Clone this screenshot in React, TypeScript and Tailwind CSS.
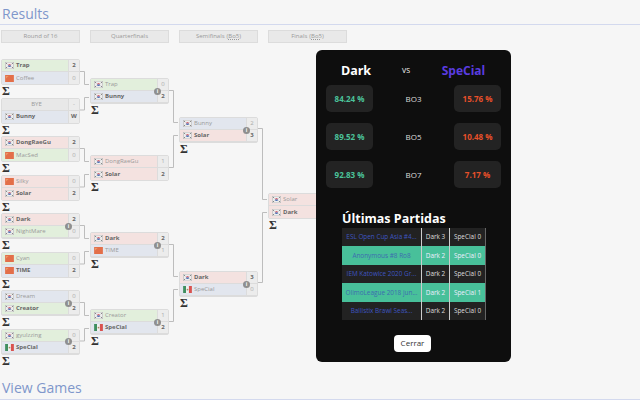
type Flag = "kr" | "cn" | "mx" | "";
type Tone = "green" | "red" | "blue" | "gray";
type Row = { name: string; flag: Flag; score: string; tone: Tone; win?: boolean };
type Game = { top: Row; bottom: Row; info?: boolean };

const r = (name: string, flag: Flag, score: string, tone: Tone, win = false): Row => ({ name, flag, score, tone, win });

const round16: Game[] = [
  { top: r("Trap", "kr", "2", "green", true), bottom: r("Coffee", "cn", "0", "blue") },
  { top: r("BYE", "", "-", "gray"), bottom: r("Bunny", "kr", "W", "blue", true) },
  { top: r("DongRaeGu", "kr", "2", "red", true), bottom: r("MacSed", "cn", "0", "green") },
  { top: r("Silky", "cn", "0", "red"), bottom: r("Solar", "kr", "2", "red", true) },
  { top: r("Dark", "kr", "2", "red", true), bottom: r("NightMare", "kr", "0", "green"), info: true },
  { top: r("Cyan", "cn", "0", "green"), bottom: r("TIME", "cn", "2", "blue", true) },
  { top: r("Dream", "kr", "0", "blue"), bottom: r("Creator", "kr", "2", "green", true), info: true },
  { top: r("gyulzzing", "kr", "0", "green"), bottom: r("SpeCial", "mx", "2", "blue", true), info: true },
];
const quarters: Game[] = [
  { top: r("Trap", "kr", "0", "green"), bottom: r("Bunny", "kr", "2", "blue", true), info: true },
  { top: r("DongRaeGu", "kr", "1", "red"), bottom: r("Solar", "kr", "2", "red", true) },
  { top: r("Dark", "kr", "2", "red", true), bottom: r("TIME", "cn", "1", "blue"), info: true },
  { top: r("Creator", "kr", "1", "green"), bottom: r("SpeCial", "mx", "2", "blue", true), info: true },
];
const semis: Game[] = [
  { top: r("Bunny", "kr", "2", "blue"), bottom: r("Solar", "kr", "3", "red", true), info: true },
  { top: r("Dark", "kr", "3", "red", true), bottom: r("SpeCial", "mx", "0", "blue"), info: true },
];
const finals: Game[] = [{ top: r("Solar", "kr", "", "red"), bottom: r("Dark", "kr", "", "red", true) }];

const toneBg: Record<Tone, string> = {
  green: "bg-[#e2efdc]",
  red: "bg-[#f4e2e0]",
  blue: "bg-[#e2e6ee]",
  gray: "bg-[#e8e8e8]",
};

function FlagIcon({ flag }: { flag: Flag }) {
  if (flag === "mx")
    return (
      <svg width="9" height="7" viewBox="0 0 10 8" className="shrink-0">
        <rect width="3.4" height="8" fill="#3f8f5f" />
        <rect x="3.4" width="3.2" height="8" fill="#f1f1f1" />
        <rect x="6.6" width="3.4" height="8" fill="#d9534f" />
        <circle cx="5" cy="4" r="1" fill="#a98b5f" />
      </svg>
    );
  if (flag === "cn")
    return (
      <svg width="9" height="7" viewBox="0 0 10 8" className="shrink-0">
        <rect width="10" height="8" fill="#e36f49" />
        <path d="M1 1 L4 1 L1 4 Z" fill="#eb9a66" />
      </svg>
    );
  return (
    <svg width="9" height="7" viewBox="0 0 10 8" className="shrink-0">
      <rect width="10" height="8" fill="#eeeeee" stroke="#a8a8a8" strokeWidth="0.8" />
      <path d="M3.2 4 A1.8 1.8 0 0 1 6.8 4 Z" fill="#d8606a" />
      <path d="M3.2 4 A1.8 1.8 0 0 0 6.8 4 Z" fill="#4c6fb5" />
      <path d="M1 1.2 L2.4 2.4 M1 6.8 L2.4 5.6 M9 1.2 L7.6 2.4 M9 6.8 L7.6 5.6" stroke="#777" strokeWidth="1" />
    </svg>
  );
}

function TeamRow({ row }: { row: Row }) {
  return (
    <div className="flex h-[12px] border-b border-[#dcdcdc] last:border-b-0">
      <div className={`flex min-w-0 flex-1 items-center gap-[2px] pl-[3px] ${toneBg[row.tone]} ${row.flag ? "" : "justify-center"}`}>
        {row.flag && <FlagIcon flag={row.flag} />}
        <span className={`whitespace-nowrap text-[6px] leading-[11px] ${row.win ? "font-bold text-[#666]" : "text-[#9a9a9a]"}`}>{row.name}</span>
      </div>
      <div className={`flex w-[11px] shrink-0 items-center justify-center border-l border-[#dcdcdc] bg-[#ececec] text-[6px] leading-[11px] ${row.win ? "font-bold text-[#666]" : "text-[#aaa]"}`}>
        {row.score}
      </div>
    </div>
  );
}

function GameBox({ game, height }: { game: Game; height: string }) {
  return (
    <div className={height}>
      <div className="relative w-[79px] rounded-[2px] border border-[#dcdcdc]">
        <TeamRow row={game.top} />
        <TeamRow row={game.bottom} />
        {game.info && (
          <span className="absolute left-[63px] top-[8.5px] flex h-[7px] w-[7px] items-center justify-center rounded-full bg-[#8f8f8f] text-[5px] font-bold leading-none text-white">
            i
          </span>
        )}
      </div>
      <div className="pl-[1px] font-['Liberation_Serif',serif] text-[12px] font-bold leading-[13px] text-[#333]">Σ</div>
    </div>
  );
}

// line from each game to the next round, coordinates inside the bracket box
function Connectors() {
  const lines: string[] = [];
  const link = (x: number, fromY: number, toY: number) => {
    lines.push(`M${x} ${fromY} H${x + 5.5} V${toY} H${x + 10}`);
  };
  round16.forEach((_, i) => {
    const y = 28.5 + i * 38.5;
    const q = Math.floor(i / 2);
    link(79, y, 41.5 + q * 77 + (i % 2 === 0 ? 0 : 13));
  });
  quarters.forEach((_, i) => {
    const y = 47.5 + i * 77;
    const s = Math.floor(i / 2);
    link(168, y, 79.5 + s * 154 + (i % 2 === 0 ? 0 : 13));
  });
  semis.forEach((_, i) => {
    const y = 85.5 + i * 154;
    link(257, y, 156.5 + (i % 2 === 0 ? 0 : 13));
  });
  return (
    <svg className="absolute left-0 top-0" width="280" height="335" fill="none">
      {lines.map((d, i) => (
        <path key={i} d={d} stroke="#bdbdbd" strokeWidth="1" />
      ))}
    </svg>
  );
}

function Percent({ value, color }: { value: string; color: string }) {
  return (
    <div className={`flex h-[27px] w-[47px] items-center justify-center rounded-[5px] bg-[#232323] text-[8px] font-bold ${color}`}>
      {value}
    </div>
  );
}

const stats = [
  { left: "84.24 %", mode: "BO3", right: "15.76 %" },
  { left: "89.52 %", mode: "BO5", right: "10.48 %" },
  { left: "92.83 %", mode: "BO7", right: "7.17 %" },
];

const recent = [
  { name: "ESL Open Cup Asia #4...", a: "Dark 3", b: "SpeCial 0", hl: false },
  { name: "Anonymous #8 Ro8", a: "Dark 2", b: "SpeCial 0", hl: true },
  { name: "IEM Katowice 2020 Gr...", a: "Dark 2", b: "SpeCial 0", hl: false },
  { name: "OlimoLeague 2018 jun...", a: "Dark 2", b: "SpeCial 1", hl: true },
  { name: "Ballistix Brawl Seas...", a: "Dark 2", b: "SpeCial 0", hl: false },
];

function Modal() {
  return (
    <div className="absolute left-[316px] top-[50px] flex h-[312px] w-[195px] flex-col rounded-[6px] bg-[#0e0e0e] px-[10px] pt-[12px] font-['Open_Sans',sans-serif] text-white">
      <div className="flex h-[18px] items-center">
        <div className="w-[60px] text-center text-[12.5px] font-bold leading-[18px]">Dark</div>
        <div className="ml-[14px] w-[12px] text-center text-[7px] leading-[18px]">VS</div>
        <div className="ml-[14px] w-[75px] text-center text-[12px] font-bold leading-[18px] text-[#5a3ce0]">SpeCial</div>
      </div>
      <div className="mt-[5px] flex flex-col gap-[11px]">
        {stats.map((s) => (
          <div key={s.mode} className="flex items-center justify-between">
            <Percent value={s.left} color="text-[#4bc39b]" />
            <span className="text-[8px] text-[#ddd]">{s.mode}</span>
            <Percent value={s.right} color="text-[#e8502a]" />
          </div>
        ))}
      </div>
      <h3 className="ml-[16px] mt-[21px] text-[12.5px] font-bold leading-[20px]">Últimas Partidas</h3>
      <div className="ml-[16px] mt-[-1px] w-[144px] text-[6.4px]">
        {recent.map((m) => (
          <div key={m.name} className={`flex h-[18.4px] items-center ${m.hl ? "bg-[#48c09a] text-[#eef]" : "bg-[#222] text-[#ddd]"}`}>
            <div className={`w-[79px] whitespace-nowrap text-center ${m.hl ? "text-[#3d6bb0]" : "text-[#3f55c0]"}`}>{m.name}</div>
            <div className="flex h-full w-[28px] items-center justify-center border-l border-[#ccc]">{m.a}</div>
            <div className="flex h-full w-[37px] items-center justify-center border-x border-l-[#ccc] border-r-[#666]">{m.b}</div>
          </div>
        ))}
      </div>
      <button className="mx-auto mt-[15px] h-[17px] w-[37px] translate-x-[-1px] rounded-[4px] bg-white text-[8px] text-[#333]">Cerrar</button>
    </div>
  );
}

const headers = ["Round of 16", "Quarterfinals", "Semifinals", "Finals"];

export default function App() {
  return (
    <div className="relative h-[400px] w-[640px] overflow-hidden bg-[#f6f6f6] font-['Open_Sans',sans-serif]">
      <h2 className="h-[25px] border-b border-[#d3d9ee] pl-[2px] text-[14px] leading-[27px] text-[#7f97cb]">Results</h2>
      <div className="mt-[5px] flex gap-[10px] pl-[1px]">
        {headers.map((h, i) => (
          <div key={h} className="flex h-[13px] w-[79px] items-center justify-center border border-[#dcdcdc] bg-[#e9e9e9] text-[6px] text-[#999]">
            {h}
            {i >= 2 && (
              <span className="ml-[2px]">
                (<span className="underline decoration-dotted">Bo5</span>)
              </span>
            )}
          </div>
        ))}
      </div>
      <div className="relative flex h-[335px] gap-[10px] pl-[1px]">
        <Connectors />
        <div className="relative pt-[16px]">
          {round16.map((g, i) => (
            <GameBox key={i} game={g} height="h-[38.5px]" />
          ))}
        </div>
        <div className="relative pt-[35px]">
          {quarters.map((g, i) => (
            <GameBox key={i} game={g} height="h-[77px]" />
          ))}
        </div>
        <div className="relative pt-[74px]">
          {semis.map((g, i) => (
            <GameBox key={i} game={g} height="h-[154px]" />
          ))}
        </div>
        <div className="relative pt-[150px]">
          {finals.map((g, i) => (
            <GameBox key={i} game={g} height="h-[40px]" />
          ))}
        </div>
      </div>
      <h2 className="h-[22px] border-b border-[#d3d9ee] pl-[2px] text-[14px] leading-[20px] text-[#7f97cb]">View Games</h2>
      <Modal />
    </div>
  );
}
